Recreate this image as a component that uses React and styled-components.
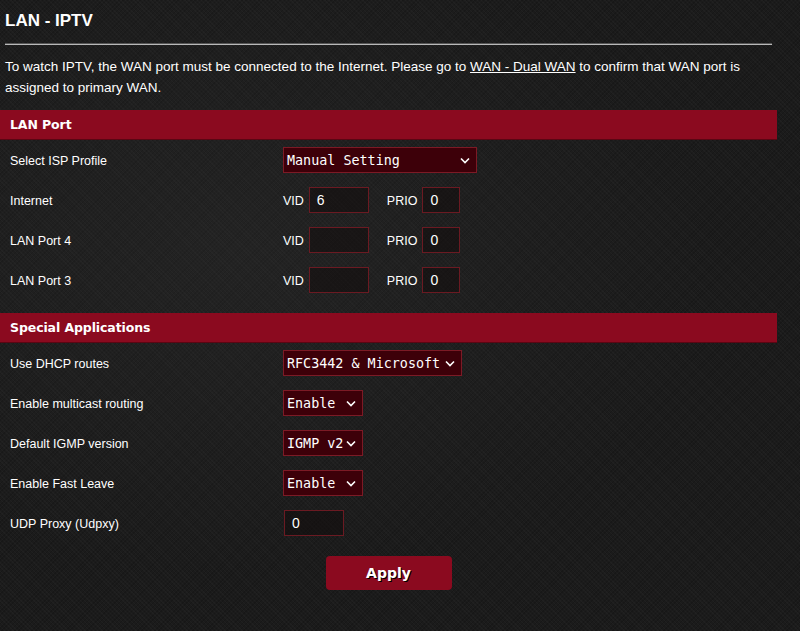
import React from 'react';
import styled, { createGlobalStyle } from 'styled-components';

const GlobalStyle = createGlobalStyle`
	html, body {
		margin: 0;
		padding: 0;
		background-color: #1b1b1b;
	}
	body {
		font-family: "Liberation Sans", Arial, sans-serif;
		color: #ffffff;
	}
`;

const Page = styled.div`
	width: 800px;
	height: 631px;
	overflow: hidden;
	background-color: #1b1b1b;
	background-image:
		radial-gradient(ellipse at 30% 40%, rgba(60, 60, 60, 0.25), rgba(0, 0, 0, 0) 60%),
		repeating-linear-gradient(45deg, rgba(255, 255, 255, 0.025) 0 1px, rgba(0, 0, 0, 0) 1px 3px),
		repeating-linear-gradient(-45deg, rgba(0, 0, 0, 0.15) 0 1px, rgba(0, 0, 0, 0) 1px 3px);
`;

const Content = styled.div`
	width: 777px;
	display: flex;
	flex-direction: column;
`;

const Title = styled.h2`
	margin: 0;
	padding: 10px 5px 0;
	font-size: 17px;
	line-height: 22px;
	font-weight: bold;
	color: #ffffff;
`;

const Rule = styled.div`
	margin: 11px 5px 0;
	height: 2px;
	width: 767px;
	background-color: #b9b9b9;
	border-top: 1px solid #555;
	box-sizing: border-box;
`;

const Description = styled.p`
	margin: 11px 0 0;
	padding: 0 5px;
	font-size: 13.5px;
	line-height: 21px;
	color: #ffffff;
`;

const Link = styled.a`
	color: #ffffff;
	text-decoration: underline;
	cursor: pointer;
`;

const SectionBar = styled.div`
	margin-top: ${(p) => p.$top}px;
	height: 30px;
	display: flex;
	align-items: center;
	padding-left: 10px;
	background-color: #8b0a1f;
	border-bottom: 1px solid #5a0613;
	box-sizing: border-box;
	font-family: "DejaVu Sans", Verdana, sans-serif;
	font-weight: bold;
	font-size: 12.5px;
	letter-spacing: -0.1px;
	color: #ffffff;
`;

const Row = styled.div`
	height: 40px;
	display: flex;
	align-items: center;
`;

const Label = styled.div`
	width: 283px;
	padding: 2px 0 0 10px;
	box-sizing: border-box;
	font-size: 12.5px;
	color: #ffffff;
`;

const Field = styled.div`
	display: flex;
	align-items: center;
`;

const SmallLabel = styled.span`
	font-size: 12.5px;
	padding-top: 1px;
	color: #ffffff;
	margin-left: ${(p) => p.$left || 0}px;
	margin-right: 5px;
`;

const SelectBox = styled.div`
	width: ${(p) => p.$width}px;
	height: 26px;
	box-sizing: border-box;
	display: flex;
	align-items: center;
	justify-content: space-between;
	padding: 0 6px 0 3px;
	background-color: #3d0009;
	border: 1px solid #7c1a25;
	font-family: "DejaVu Sans Mono", Consolas, monospace;
	font-size: 13.4px;
	color: #ffffff;
	white-space: pre;
`;

const TextBox = styled.div`
	width: ${(p) => p.$width}px;
	height: 26px;
	margin-left: ${(p) => p.$left || 0}px;
	box-sizing: border-box;
	display: flex;
	align-items: center;
	padding-left: 7px;
	background-color: rgba(18, 12, 12, 0.55);
	border: 1px solid #6b1a22;
	font-size: 14px;
	color: #ffffff;
`;

const ButtonRow = styled.div`
	display: flex;
	justify-content: center;
	margin-top: 13px;
`;

const ApplyButton = styled.button`
	width: 126px;
	height: 34px;
	border: none;
	border-radius: 4px;
	background-color: #8b0a1f;
	color: #ffffff;
	font-family: "DejaVu Sans", Verdana, sans-serif;
	font-weight: bold;
	font-size: 14px;
	text-shadow: 1px 1px 0 #000;
	cursor: pointer;
`;

const Chevron = () => (
	<svg width="10" height="7" viewBox="0 0 10 7">
		<polyline points="1,1.5 5,5.5 9,1.5" fill="none" stroke="#ffffff" strokeWidth="1.6" />
	</svg>
);

const Select = ({ width, value }) => (
	<SelectBox $width={width}>
		<span>{value}</span>
		<Chevron />
	</SelectBox>
);

const vlanRows = [
	{ name: 'Internet', vid: '6', prio: '0' },
	{ name: 'LAN Port 4', vid: '', prio: '0' },
	{ name: 'LAN Port 3', vid: '', prio: '0' },
];

const specialRows = [
	{ name: 'Use DHCP routes', value: 'RFC3442 & Microsoft', width: 179 },
	{ name: 'Enable multicast routing', value: 'Enable', width: 80 },
	{ name: 'Default IGMP version', value: 'IGMP v2', width: 80 },
	{ name: 'Enable Fast Leave', value: 'Enable', width: 80 },
];

export default function App() {
	return (
		<Page>
			<GlobalStyle />
			<Content>
				<Title>LAN - IPTV</Title>
				<Rule />
				<Description>
					To watch IPTV, the WAN port must be connected to the Internet. Please go to{' '}
					<Link>WAN - Dual WAN</Link> to confirm that WAN port is assigned to primary WAN.
				</Description>

				<SectionBar $top={12}>LAN Port</SectionBar>
				<Row>
					<Label>Select ISP Profile</Label>
					<Select width={194} value="Manual Setting" />
				</Row>
				{vlanRows.map((r) => (
					<Row key={r.name}>
						<Label>{r.name}</Label>
						<Field>
							<SmallLabel>VID</SmallLabel>
							<TextBox $width={60}>{r.vid}</TextBox>
							<SmallLabel $left={18}>PRIO</SmallLabel>
							<TextBox $width={38}>{r.prio}</TextBox>
						</Field>
					</Row>
				))}

				<SectionBar $top={13}>Special Applications</SectionBar>
				{specialRows.map((r) => (
					<Row key={r.name}>
						<Label>{r.name}</Label>
						<Select width={r.width} value={r.value} />
					</Row>
				))}
				<Row>
					<Label>UDP Proxy (Udpxy)</Label>
					<TextBox $width={60} $left={1}>0</TextBox>
				</Row>

				<ButtonRow>
					<ApplyButton>Apply</ApplyButton>
				</ButtonRow>
			</Content>
		</Page>
	);
}
